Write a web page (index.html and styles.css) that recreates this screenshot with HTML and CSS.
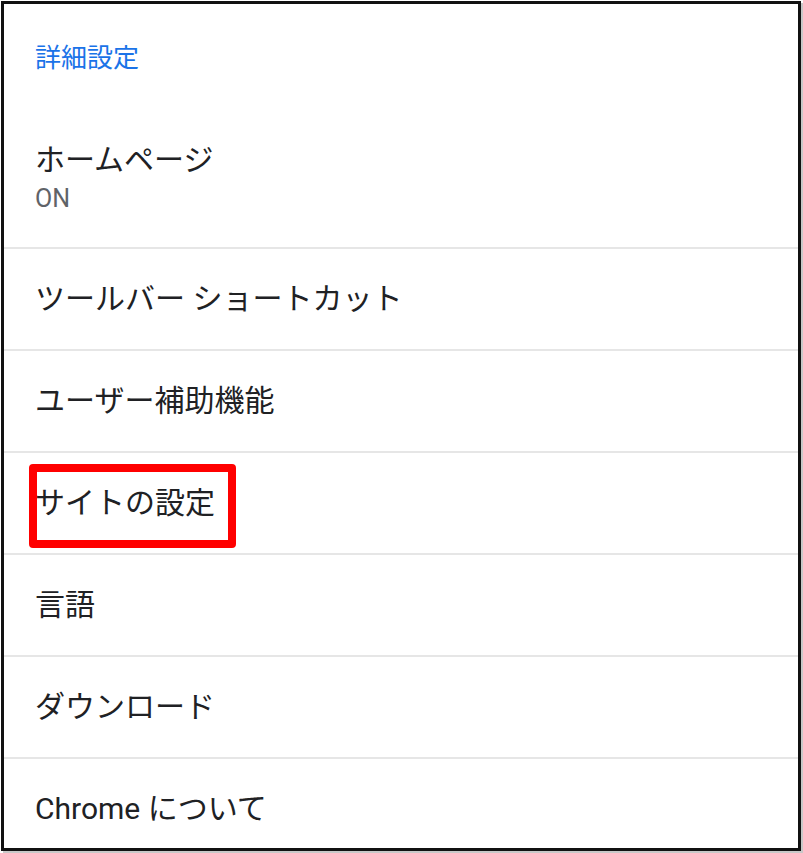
FILE: index.html
```html
<!DOCTYPE html>
<html lang="ja">
<head>
<meta charset="utf-8">
<title>詳細設定</title>
<link rel="stylesheet" href="styles.css">
</head>
<body>
<div class="frame">
  <div class="section-header">詳細設定</div>
  <div class="item item-first">
    <div class="title">ホームページ</div>
    <div class="summary">ON</div>
  </div>
  <div class="item row"><div class="title">ツールバー ショートカット</div></div>
  <div class="item row"><div class="title">ユーザー補助機能</div></div>
  <div class="item row"><div class="title"><span class="highlight">サイトの設定</span></div></div>
  <div class="item row"><div class="title">言語</div></div>
  <div class="item row"><div class="title">ダウンロード</div></div>
  <div class="item row"><div class="title">Chrome について</div></div>
</div>
</body>
</html>
```

FILE: styles.css
```css
html, body {
  margin: 0;
  padding: 0;
  background: #ffffff;
}
body {
  width: 803px;
  height: 853px;
  overflow: hidden;
  font-family: Roboto, "Noto Sans CJK JP", sans-serif;
}
.frame {
  box-sizing: border-box;
  margin: 1px;
  width: 800px;
  height: 850px;
  border: 3px solid #111111;
  box-shadow: 2px 2px 0 #c8c8c8;
  overflow: hidden;
  background: #ffffff;
}
.section-header {
  padding: 36px 0 0 31px;
  font-size: 26px;
  line-height: 36px;
  color: #1a73e8;
  height: 64px;
}
.item {
  padding-left: 31px;
  color: #202124;
}
.item-first {
  box-sizing: border-box;
  padding-top: 36px;
  height: 143px;
}
.title {
  font-size: 30px;
  line-height: 40px;
}
.summary {
  margin-top: 2px;
  font-size: 25px;
  line-height: 34px;
  color: #5f6368;
}
.row {
  border-top: 2px solid #e6e6e6;
  height: 100px;
  display: flex;
  align-items: center;
}
.highlight {
  position: relative;
}
.highlight::after {
  content: "";
  position: absolute;
  left: -6px;
  top: -21px;
  width: 207px;
  height: 84px;
  box-sizing: border-box;
  border: 8px solid #ff0000;
  border-radius: 4px;
}
```
